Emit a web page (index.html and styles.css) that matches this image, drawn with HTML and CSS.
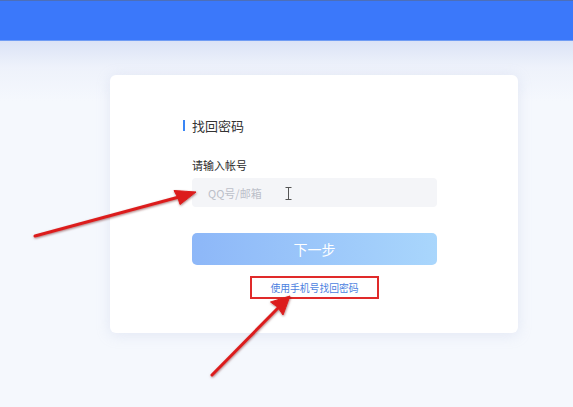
FILE: index.html
```html
<!DOCTYPE html>
<html lang="zh-CN">
<head>
<meta charset="utf-8">
<title>找回密码</title>
<link rel="stylesheet" href="styles.css">
</head>
<body>
<header class="topbar"></header>
<main class="stage">
  <section class="card">
    <h1 class="title"><span class="title-bar"></span>找回密码</h1>
    <div class="form">
      <label class="label">请输入帐号</label>
      <div class="input">
        <span class="placeholder">QQ号/邮箱</span>
        <svg class="ibeam" width="7" height="13" viewBox="0 0 7 13"><path d="M0.5 0.5h6M3.5 0.5v12M0.5 12.5h6" stroke="#555" stroke-width="1" fill="none"/></svg>
      </div>
      <button class="next">下一步</button>
      <div class="link-row"><a class="phone-link">使用手机号找回密码</a></div>
    </div>
  </section>
</main>
<svg class="annotations" width="573" height="407" viewBox="0 0 573 407">
  <defs>
    <filter id="sh" x="-20%" y="-20%" width="140%" height="140%">
      <feDropShadow dx="0.5" dy="1" stdDeviation="0.8" flood-color="#5a0000" flood-opacity="0.5"/>
    </filter>
  </defs>
  <g fill="#dc1f1f" stroke="#dc1f1f" filter="url(#sh)">
    <path d="M35 236 L179 197" stroke-width="3" stroke-linecap="round" fill="none"/>
    <path d="M196 192 L174 190.5 L178 198 L180 204.5 Z" stroke-width="1" stroke-linejoin="round"/>
    <path d="M212 375 L279 307" stroke-width="3" stroke-linecap="round" fill="none"/>
    <path d="M290 296 L283 315 L277.5 307 L270.5 302 Z" stroke-width="1" stroke-linejoin="round"/>
  </g>
</svg>
</body>
</html>
```

FILE: styles.css
```css
html, body {
  margin: 0;
  padding: 0;
}
body {
  width: 573px;
  height: 407px;
  overflow: hidden;
  position: relative;
  background: #f4f7fd;
  font-family: "Noto Sans CJK SC", "Noto Sans", sans-serif;
}
.topbar {
  height: 41px;
  box-sizing: border-box;
  background: #3b78fa;
  border-top: 1px solid #4d6fb8;
  border-bottom: 1px solid #6f9cf4;
}
.stage {
  height: 366px;
  box-sizing: border-box;
  padding-top: 34px;
  background: linear-gradient(to bottom, #dbe3f6 0px, #eef2fb 26px, #f5f8fd 60px, #f5f8fd 100%);
}
.card {
  margin-left: 110px;
  width: 408px;
  height: 258px;
  box-sizing: border-box;
  background: #ffffff;
  border-radius: 6px;
  box-shadow: 0 2px 14px rgba(170, 185, 220, 0.25);
  padding: 40px 0 0 73px;
}
.title {
  margin: 0;
  display: flex;
  align-items: center;
  height: 20px;
  font-size: 13px;
  font-weight: 400;
  color: #333;
}
.title-bar {
  width: 2px;
  height: 11px;
  background: #3a86f5;
  margin-right: 7px;
}
.form {
  margin-left: 9px;
  width: 245px;
  display: flex;
  flex-direction: column;
}
.label {
  margin-top: 22px;
  height: 16px;
  line-height: 16px;
  font-size: 11px;
  color: #2b2b2b;
}
.input {
  margin-top: 5px;
  height: 29px;
  border-radius: 4px;
  background: #f4f5f8;
  display: flex;
  align-items: center;
  padding-left: 16px;
}
.placeholder {
  font-size: 11px;
  color: #bcc0c9;
}
.ibeam {
  margin-left: 23px;
  margin-top: 1px;
}
.next {
  margin-top: 26px;
  height: 32px;
  border: 0;
  border-radius: 5px;
  padding: 0;
  background: linear-gradient(to right, #8db7f8, #a9d6fc);
  color: #ffffff;
  font-family: inherit;
  font-size: 14px;
}
.link-row {
  margin-top: 11px;
  display: flex;
  justify-content: center;
}
.phone-link {
  width: 129px;
  height: 23px;
  box-sizing: border-box;
  border: 2px solid #e02a2a;
  display: flex;
  align-items: center;
  justify-content: center;
  font-size: 9.8px;
  color: #4c7fe0;
}
.annotations {
  position: absolute;
  left: 0;
  top: 0;
}
```
